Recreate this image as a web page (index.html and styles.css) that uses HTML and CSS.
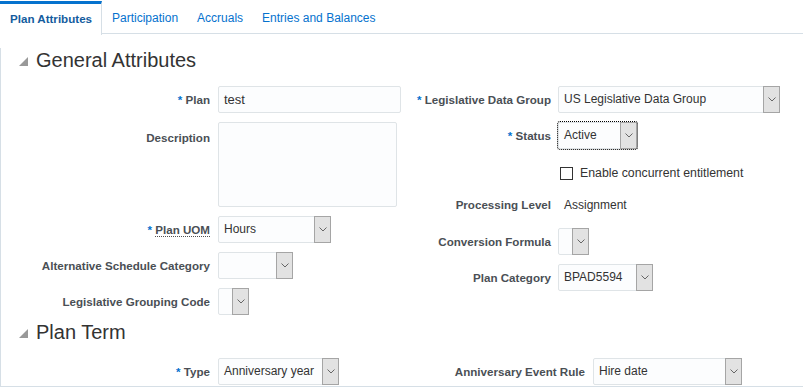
FILE: index.html
```html
<!DOCTYPE html>
<html lang="en">

<head>
    <meta charset="UTF-8">
    <title>Plan Attributes</title>
    <link rel="stylesheet" href="styles.css">
</head>

<body>
    <!-- tabs -->
    <div class="tabs">
        <div class="tab active">Plan Attributes</div>
        <div class="tab">Participation</div>
        <div class="tab">Accruals</div>
        <div class="tab">Entries and Balances</div>
    </div>

    <div class="panel">
        <h2 class="hdr"><span class="tri"></span>General Attributes</h2>
        <div class="cols">
            <div class="col left">
                <label class="lbl"><span class="req">*</span> Plan</label>
                <div class="input w-plan">test</div>

                <label class="lbl top">Description</label>
                <div class="area"><span class="grip"></span></div>

                <label class="lbl"><span class="req">*</span> <span class="dot">Plan UOM</span></label>
                <div class="select w-uom"><span class="val">Hours</span><span class="btn"></span></div>

                <label class="lbl">Alternative Schedule Category</label>
                <div class="select w-alt"><span class="val"></span><span class="btn"></span></div>

                <label class="lbl">Legislative Grouping Code</label>
                <div class="select w-tiny"><span class="val"></span><span class="btn"></span></div>
            </div>

            <div class="col right">
                <label class="lbl"><span class="req">*</span> Legislative Data Group</label>
                <div class="select w-ldg"><span class="val">US Legislative Data Group</span><span class="btn"></span></div>

                <label class="lbl"><span class="req">*</span> Status</label>
                <div class="select w-status focus"><span class="val">Active</span><span class="btn"></span></div>

                <span></span>
                <div class="check"><span class="box"></span>Enable concurrent entitlement</div>

                <label class="lbl up">Processing Level</label>
                <div class="text up">Assignment</div>

                <label class="lbl">Conversion Formula</label>
                <div class="select w-tiny"><span class="val"></span><span class="btn"></span></div>

                <label class="lbl">Plan Category</label>
                <div class="select w-cat"><span class="val">BPAD5594</span><span class="btn"></span></div>
            </div>
        </div>

        <h2 class="hdr term"><span class="tri"></span>Plan Term</h2>
        <div class="cols term-row">
            <div class="col left">
                <label class="lbl"><span class="req">*</span> Type</label>
                <div class="select w-type"><span class="val">Anniversary year</span><span class="btn"></span></div>
            </div>
            <div class="col right wide">
                <label class="lbl">Anniversary Event Rule</label>
                <div class="select w-rule"><span class="val">Hire date</span><span class="btn"></span></div>
            </div>
        </div>
    </div>
</body>

</html>
```

FILE: styles.css
```css
/* reset */
* {
    margin: 0;
    padding: 0;
    box-sizing: border-box;
}

body {
    width: 803px;
    height: 388px;
    overflow: hidden;
    background: #fff;
    font-family: "Liberation Sans", Arial, sans-serif;
    font-size: 12px;
    color: #333;
}

/* tab bar */
.tabs {
    display: flex;
    height: 34px;
    border-bottom: 1px solid #d6dfe6;
}

.tab {
    padding: 4px 9px 0 10px;
    line-height: 29px;
    color: #0572ce;
}

.tab.active {
    margin: 1px 0 -1px;
    height: 34px;
    padding-top: 0;
    border-top: 3px solid #0572ce;
    border-right: 1px solid #d6dfe6;
    background: #fff;
    color: #145c9e;
    font-weight: bold;
    font-size: 11.6px;
}

/* panel body */
.panel {
    border-left: 1px solid #d6dfe6;
    border-bottom: 1px solid #d6dfe6;
    padding-bottom: 1px;
}

.hdr {
    display: flex;
    align-items: center;
    margin: 14px 0 14px 17px;
    height: 24px;
    font-size: 20px;
    font-weight: normal;
    color: #333;
}

.hdr.term {
    margin-top: 5px;
    margin-bottom: 14px;
}

/* collapse triangle */
.tri {
    width: 0;
    height: 0;
    margin: 3px 8px 0 1px;
    border-left: 9px solid transparent;
    border-bottom: 9px solid #999;
}

.cols {
    display: flex;
}

.col {
    display: grid;
    row-gap: 9px;
    align-items: center;
    align-content: start;
}

.col.left {
    width: 399px;
    grid-template-columns: 209px 1fr;
    column-gap: 8px;
}

.col.right {
    grid-template-columns: 151px 1fr;
    column-gap: 7px;
    grid-template-rows: 27px 27px 27px 25px 27px 27px;
}

.col.right.wide {
    grid-template-columns: 185px 1fr;
    column-gap: 8px;
    grid-template-rows: 27px;
}

.lbl {
    text-align: right;
    font-weight: bold;
    font-size: 11.6px;
    color: #4a4f55;
    white-space: nowrap;
}

.lbl.top {
    align-self: start;
    padding-top: 2px;
    line-height: 27px;
}

.up {
    margin-top: -4px;
}

.req {
    color: #0572ce;
}

.dot {
    border-bottom: 1px dotted #4f4f4f;
}

/* inputs */
.input,
.area,
.select {
    height: 27px;
    border: 1px solid #dfe4e7;
    border-radius: 2px;
    background: #fcfdfe;
    color: #333;
}

.input {
    padding: 0 5px;
    line-height: 25px;
    font-size: 13px;
}

.w-plan { width: 183px; }

.area {
    position: relative;
    width: 179px;
    height: 85px;
}

/* resize grip in the corner */
.grip {
    position: absolute;
    right: 3px;
    bottom: 3px;
    width: 6px;
    height: 6px;
    background:
        radial-gradient(circle, #aaa 45%, transparent 50%) 0 0 / 2px 2px;
    clip-path: polygon(100% 0, 100% 100%, 0 100%);
}

.select {
    display: flex;
    align-items: stretch;
}

.select .val {
    flex: 1;
    padding-left: 5px;
    line-height: 25px;
    overflow: hidden;
    white-space: nowrap;
}

.select .btn {
    width: 17px;
    margin: -1px -1px -1px 0;
    border: 1px solid #a5a5a5;
    background: #e2e2e2 url("data:image/svg+xml;utf8,<svg xmlns='http://www.w3.org/2000/svg' width='8' height='5'><polyline points='0.5,0.5 4,4 7.5,0.5' fill='none' stroke='%23666' stroke-width='1'/></svg>") no-repeat center;
}

.select.focus {
    outline: 1px dotted #000;
}

.w-uom { width: 113px; }
.w-alt { width: 75px; }
.w-tiny { width: 31px; }
.w-ldg { width: 222px; }
.w-status { width: 79px; }
.w-cat { width: 95px; }
.w-type { width: 121px; }
.w-rule { width: 149px; }

.check {
    display: flex;
    align-items: center;
    margin-top: 3px;
    padding-left: 2px;
    font-size: 12.3px;
    color: #333;
}

.check .box {
    width: 13px;
    height: 13px;
    margin-right: 7px;
    border: 1px solid #333;
    background: #fff;
}

.text {
    padding-left: 6px;
    color: #333;
}
```
